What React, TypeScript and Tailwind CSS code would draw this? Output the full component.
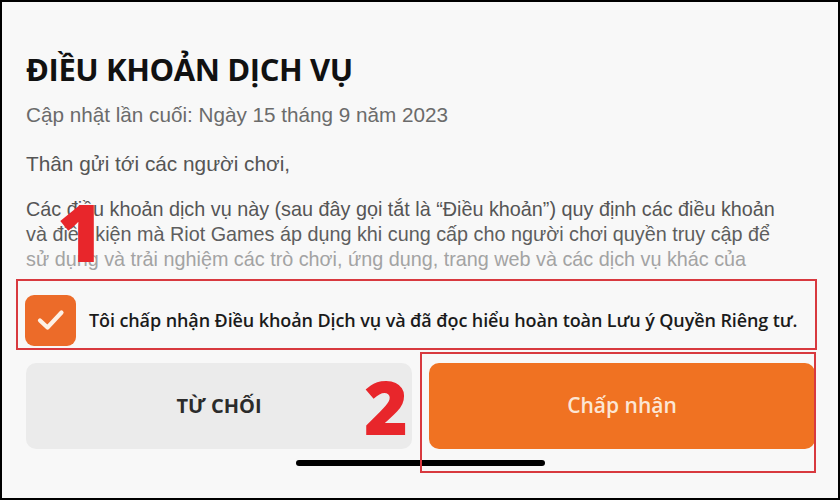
import React from 'react';

const body = "font-['Liberation_Sans',Arial,sans-serif]";
const sans = "font-['Open_Sans','Noto_Sans',sans-serif]";

export default function App() {
  return (
    <div className="relative w-[840px] h-[500px] overflow-hidden border-2 border-black bg-[#f8f8f8]">
      <div className="flex flex-col items-start">
        {/* Header text */}
        <div className="pl-[24px] pt-[47px]">
          <h1 className={`${sans} text-[31px] leading-[40px] font-bold text-[#111] tracking-[-0.4px]`}>
            ĐIỀU KHOẢN DỊCH VỤ
          </h1>
          <p className={`${body} mt-[12px] text-[20.7px] leading-[28px] text-[#6b6b6b]`}>
            Cập nhật lần cuối: Ngày 15 tháng 9 năm 2023
          </p>
          <p className={`${body} mt-[22px] text-[20.8px] leading-[25px] text-[#555]`}>
            Thân gửi tới các người chơi,
          </p>
          <div className={`${body} mt-[21px] text-[19.8px] leading-[25px] whitespace-nowrap`}>
            <p className="text-[#555]">
              Các điều khoản dịch vụ này (sau đây gọi tắt là “Điều khoản”) quy định các điều khoản
            </p>
            <p className="text-[#5e5e5e]">
              và điều kiện mà Riot Games áp dụng khi cung cấp cho người chơi quyền truy cập để
            </p>
            <p className="text-[#a3a3a3]">
              sử dụng và trải nghiệm các trò chơi, ứng dụng, trang web và các dịch vụ khác của
            </p>
          </div>
        </div>

        {/* Accept checkbox row */}
        <div className="mt-[7px] ml-[14px] w-[801px] h-[71px] border-2 border-[#d8393f] flex items-center gap-[13px] pl-[7px] pt-[11px]">
          <div className="w-[51px] h-[51px] rounded-[9px] bg-[#ec6b29] flex items-center justify-center shrink-0">
            <svg width="28" height="24" viewBox="0 0 28 24" fill="none">
              <path d="M3 12.5 L10.5 19.5 L24.5 4.5" stroke="#fdf1e6" strokeWidth="4.2" strokeLinecap="round" strokeLinejoin="round" />
            </svg>
          </div>
          <p className={`${sans} text-[18px] font-semibold text-[#1b1b1b] whitespace-nowrap tracking-[-0.1px]`}>
            Tôi chấp nhận Điều khoản Dịch vụ và đã đọc hiểu hoàn toàn Lưu ý Quyền Riêng tư.
          </p>
        </div>

        {/* Buttons */}
        <div className="mt-[13px] w-full pl-[24px] pr-[23px] grid grid-cols-2 gap-[17px]">
          <button className={`${sans} h-[86px] rounded-[10px] bg-[#ebebeb] text-[20px] font-bold text-[#2b2b2b]`}>
            TỪ CHỐI
          </button>
          <button className={`${sans} h-[86px] rounded-[10px] bg-[#f07222] text-[21px] font-semibold text-[#fce6d4]`}>
            Chấp nhận
          </button>
        </div>

        {/* Home indicator */}
        <div className="mt-[11px] self-center w-[249px] h-[6px] rounded-full bg-black" />
      </div>

      {/* Annotations */}
      <div className="absolute left-[418px] top-[350px] w-[396px] h-[121px] border-2 border-[#d8393f]" />
      <span className={`${sans} absolute left-[55px] top-[189px] text-[80px] leading-none font-extrabold text-[#e8262b]`}>
        1
      </span>
      <span className={`${sans} absolute left-[362px] top-[367px] text-[75px] leading-none font-extrabold text-[#e8262b]`}>
        2
      </span>
    </div>
  );
}
